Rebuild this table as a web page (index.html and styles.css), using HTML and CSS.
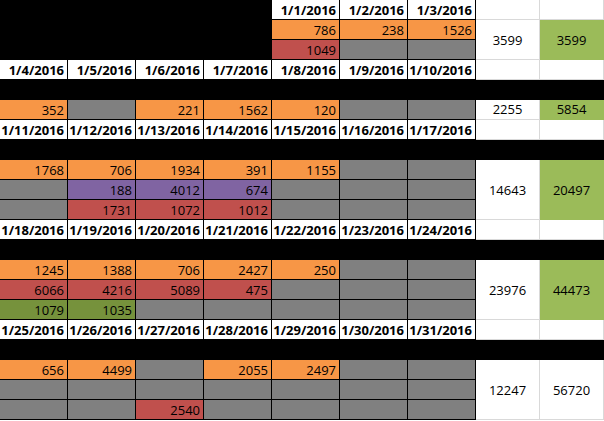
FILE: index.html
```html
<!DOCTYPE html>
<html>
<head>
<meta charset="utf-8">
<link rel="stylesheet" href="styles.css">
</head>
<body>
<div class="sheet">
  <!-- week 0 -->
  <div class="blk corner"></div>
  <div class="c d">1/1/2016</div><div class="c d">1/2/2016</div><div class="c d">1/3/2016</div>
  <div class="s"></div><div class="s"></div>
  <div class="c o">786</div><div class="c o">238</div><div class="c o">1526</div>
  <div class="s span3 two">3599</div><div class="s g span3 two">3599</div>
  <div class="c r">1049</div><div class="c x"></div><div class="c x"></div>
  <div class="c d">1/4/2016</div><div class="c d">1/5/2016</div><div class="c d">1/6/2016</div><div class="c d">1/7/2016</div><div class="c d">1/8/2016</div><div class="c d">1/9/2016</div><div class="c d">1/10/2016</div>
  <div class="s"></div><div class="s"></div>
  <div class="blk row"></div>

  <!-- week 1 -->
  <div class="c o">352</div><div class="c x"></div><div class="c o">221</div><div class="c o">1562</div><div class="c o">120</div><div class="c x"></div><div class="c x"></div>
  <div class="s one">2255</div><div class="s g one">5854</div>
  <div class="c d">1/11/2016</div><div class="c d">1/12/2016</div><div class="c d">1/13/2016</div><div class="c d">1/14/2016</div><div class="c d">1/15/2016</div><div class="c d">1/16/2016</div><div class="c d">1/17/2016</div>
  <div class="s"></div><div class="s"></div>
  <div class="blk row"></div>

  <!-- week 2 -->
  <div class="c o">1768</div><div class="c o">706</div><div class="c o">1934</div><div class="c o">391</div><div class="c o">1155</div><div class="c x"></div><div class="c x"></div>
  <div class="s span3 three">14643</div><div class="s g span3 three">20497</div>
  <div class="c x"></div><div class="c p">188</div><div class="c p">4012</div><div class="c p">674</div><div class="c x"></div><div class="c x"></div><div class="c x"></div>
  <div class="c x"></div><div class="c r">1731</div><div class="c r">1072</div><div class="c r">1012</div><div class="c x"></div><div class="c x"></div><div class="c x"></div>
  <div class="c d">1/18/2016</div><div class="c d">1/19/2016</div><div class="c d">1/20/2016</div><div class="c d">1/21/2016</div><div class="c d">1/22/2016</div><div class="c d">1/23/2016</div><div class="c d">1/24/2016</div>
  <div class="s"></div><div class="s"></div>
  <div class="blk row"></div>

  <!-- week 3 -->
  <div class="c o">1245</div><div class="c o">1388</div><div class="c o">706</div><div class="c o">2427</div><div class="c o">250</div><div class="c x"></div><div class="c x"></div>
  <div class="s span3 three">23976</div><div class="s g span3 three">44473</div>
  <div class="c r">6066</div><div class="c r">4216</div><div class="c r">5089</div><div class="c r">475</div><div class="c x"></div><div class="c x"></div><div class="c x"></div>
  <div class="c dg">1079</div><div class="c dg">1035</div><div class="c x"></div><div class="c x"></div><div class="c x"></div><div class="c x"></div><div class="c x"></div>
  <div class="c d">1/25/2016</div><div class="c d">1/26/2016</div><div class="c d">1/27/2016</div><div class="c d">1/28/2016</div><div class="c d">1/29/2016</div><div class="c d">1/30/2016</div><div class="c d">1/31/2016</div>
  <div class="s"></div><div class="s"></div>
  <div class="blk row"></div>

  <!-- week 4 -->
  <div class="c o">656</div><div class="c o">4499</div><div class="c x"></div><div class="c o">2055</div><div class="c o">2497</div><div class="c x"></div><div class="c x"></div>
  <div class="s span3 three">12247</div><div class="s span3 three">56720</div>
  <div class="c x"></div><div class="c x"></div><div class="c x"></div><div class="c x"></div><div class="c x"></div><div class="c x"></div><div class="c x"></div>
  <div class="c x"></div><div class="c x"></div><div class="c r">2540</div><div class="c x"></div><div class="c x"></div><div class="c x"></div><div class="c x"></div>
</div>
</body>
</html>
```

FILE: styles.css
```css
html, body {
  margin: 0;
  padding: 0;
  background: #ffffff;
}

body {
  width: 604px;
  height: 421px;
  overflow: hidden;
  font-family: "Open Sans", "Liberation Sans", sans-serif;
  font-size: 13px;
  color: #000000;
}

.sheet {
  display: grid;
  grid-template-columns: repeat(7, 68px) 64px 64px;
  grid-auto-rows: 20px;
}

.blk {
  background: #000000;
}

.corner {
  grid-column: 1 / 5;
  grid-row: span 3;
}

.row {
  grid-column: 1 / -1;
}

.c {
  box-sizing: border-box;
  border-right: 1px solid #000000;
  border-bottom: 1px solid #000000;
  text-align: right;
  padding: 2px 3px 0 0;
  line-height: 17px;
  white-space: nowrap;
  overflow: hidden;
}

.d {
  background: #ffffff;
  font-weight: 700;
}

.o { background: #f79646; }
.r { background: #c0504d; }
.p { background: #8064a2; }
.x { background: #808080; }
.dg { background: #76923c; }

.s {
  box-sizing: border-box;
  border-right: 1px solid #d9d9d9;
  border-bottom: 1px solid #d9d9d9;
  background: #ffffff;
  display: flex;
  align-items: center;
  justify-content: center;
}

.s.g {
  background: #9bbb59;
  border-color: #9bbb59;
}

.span3.two {
  grid-row: span 2;
}

.span3.three {
  grid-row: span 3;
}

.s.one {
  align-items: flex-end;
  padding-bottom: 1px;
  line-height: 17px;
}
```
